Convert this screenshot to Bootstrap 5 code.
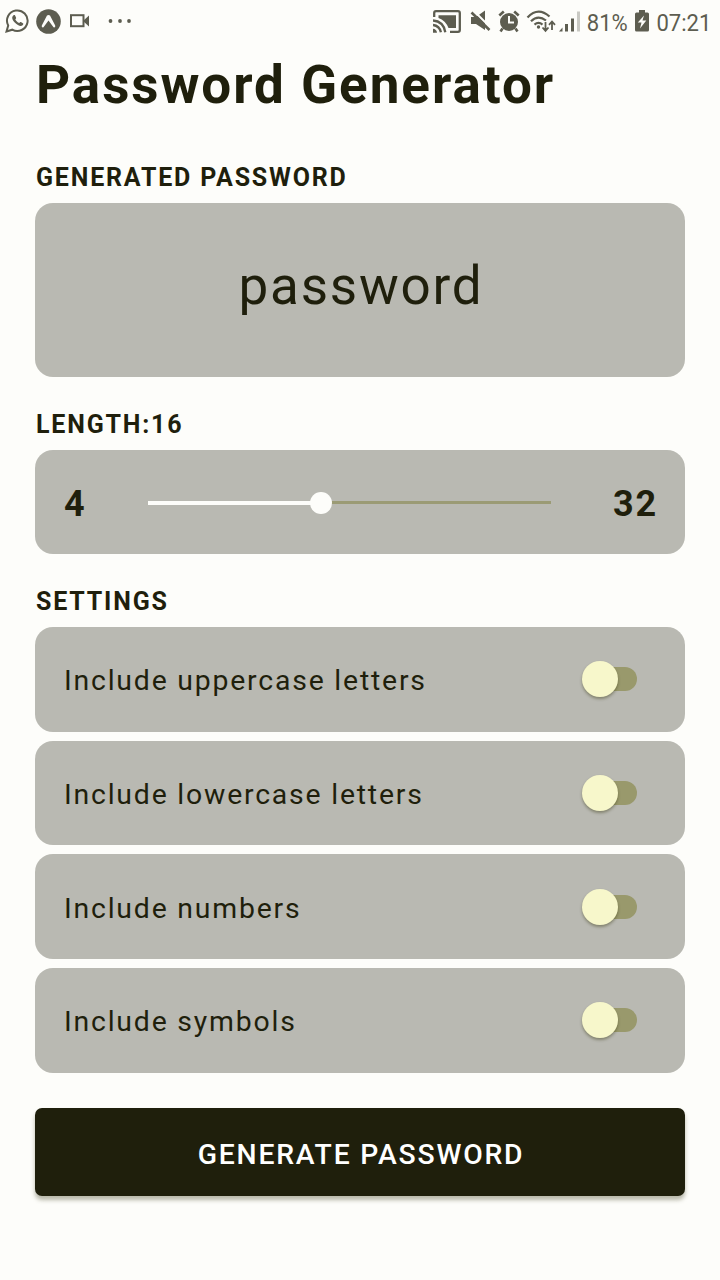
<!DOCTYPE html>
<html lang="en">
<head>
<meta charset="utf-8">
<meta name="viewport" content="width=device-width, initial-scale=1">
<title>Password Generator</title>
<link href="https://cdn.jsdelivr.net/npm/bootstrap@5.3.0/dist/css/bootstrap.min.css" rel="stylesheet">
<style>
:root{--ink:#1f1f0c;--panel:#b9b9b2;--paper:#fdfdfa;--status:#5d5d50}
body{font-family:Roboto,sans-serif;background:var(--paper);color:var(--ink);min-height:1280px;line-height:1}
.statusbar{height:42px;color:var(--status);padding-left:5px;padding-right:9px}
.statusbar svg{display:block;flex:none}
.clock{font-size:24px;line-height:40px;padding-top:3px;transform:scaleX(.92);white-space:nowrap;flex:none}
.screen{padding:0 35px 0 35px}
.title{font-size:53px;font-weight:700;letter-spacing:1.95px;line-height:60px;margin:13px 0 0 1px;height:100px;white-space:nowrap}
.caption{font-size:25px;font-weight:700;letter-spacing:1.8px;line-height:30px;margin:0 0 0 1px}
.panel{background:var(--panel);border-radius:18px}
.output{height:174px;margin-top:10px;font-size:53px;letter-spacing:1.8px;padding:0 0 8px 2px}
.range-panel{height:104px;padding:0 27px 0 29px;font-size:36px;font-weight:700;letter-spacing:1.8px}
.range-panel>span{padding-top:4px}
.track{width:403px;height:3px;background:#9b9b75}
.track-fill{height:4px;background:var(--paper)}
.thumb{width:22px;height:22px;right:-11px;top:-9px;background:var(--paper)}
.option{height:104.7px;padding:0 48px 0 29px;font-size:28.4px;letter-spacing:1.8px}
.option>span:first-child{padding-top:4px}
.toggle{width:55px;height:36px}
.toggle::before{content:"";position:absolute;right:0;top:6px;width:46px;height:24px;border-radius:12px;background:#99996c}
.toggle::after{content:"";position:absolute;left:0;top:0;width:36px;height:36px;border-radius:50%;background:#f7f7cb;box-shadow:0 2px 3px rgba(50,50,10,.4)}
.generate{height:88px;margin-top:35px;padding:13px 0 6px 2px;background:var(--ink)!important;color:#fff!important;border:0;border-radius:7px;font-size:28.3px;font-weight:500;letter-spacing:1.8px;box-shadow:0 4px 4px rgba(80,80,50,.4)}
</style>
</head>
<body>
<header class="statusbar d-flex align-items-center">
  <svg width="25" height="26" viewBox="0 0 25 26" fill="none" stroke="currentColor" stroke-width="2"><path d="M1.500 23.500l1.700-6a10.300 10.300 0 1 1 4.100 4.200z"/><path d="M8.300 7.500c-2 1.700-1 4.500 1.700 7.200s5.800 4.200 7.600 2.500c1-.9.800-1.500.3-1.900l-2-1.200c-.6-.3-.8-.1-1.600.9-1.700-.5-3.300-2-4-3.700.9-.9 1-1.100.7-1.800l-.9-2c-.4-.5-.9-.6-1.800 0z" fill="currentColor" stroke="none"/></svg>
  <svg style="margin-left:6px" width="25" height="25" viewBox="0 0 25 25"><circle cx="12.500" cy="12.500" r="12.300" fill="currentColor"/><path d="M11 6.500q1.500-1.200 3 0l5.200 10q.5 2.300-1.700 1.800L12.500 11.500 7.500 18.300q-2.200.5-1.700-1.800z" fill="#fdfdfa"/></svg>
  <svg style="margin-left:9px" width="20" height="14" viewBox="0 0 20 14"><rect x="1" y="1.200" width="12.500" height="11" fill="none" stroke="currentColor" stroke-width="2"/><path d="M13 7l6-5.500v11z" fill="currentColor"/></svg>
  <svg style="margin-left:18px" width="24" height="6" viewBox="0 0 24 6" fill="currentColor"><circle cx="2.500" cy="3" r="1.900"/><circle cx="12" cy="3" r="1.900"/><circle cx="21" cy="3" r="1.900"/></svg>
  <div class="d-flex align-items-center ms-auto">
    <svg width="28" height="23" viewBox="0 0 28 23" fill="none" stroke="currentColor" stroke-width="2.300"><path d="M1.200 7V3q0-1.800 1.800-1.800h22q1.800 0 1.800 1.800v17q0 1.800-1.800 1.800h-8"/><path d="M5.500 5.200h17.500v12.800h-7.500Q12.500 10.500 5.500 8z" fill="currentColor" stroke="none"/><path d="M0 10.500q10.500.8 12.300 11.700M0 15q6.500.8 7.900 7.300"/><path d="M0 18.800q3.500.3 4 4H0z" fill="currentColor" stroke="none"/></svg>
    <svg style="margin-left:9px" width="21" height="22" viewBox="0 0 21 22"><path d="M1 7h5l9-6.500V20l-9-6H1z" fill="currentColor"/><path d="M3 0l18 18" stroke="#fdfdfa" stroke-width="2"/><path d="M1.500 2.500l18 17.500" stroke="currentColor" stroke-width="2.600"/></svg>
    <svg style="margin-left:7px" width="22" height="23" viewBox="0 0 22 23"><circle cx="11" cy="12" r="9" fill="currentColor"/><path d="M1.300 5.500L5.800 1.500M16.200 1.500l4.500 4M4.500 18.500l-2 3M17.500 18.500l2 3" stroke="currentColor" stroke-width="2.600"/><path d="M11 6v6.500h5" fill="none" stroke="#fdfdfa" stroke-width="2"/></svg>
    <svg style="margin-left:6px" width="30" height="24" viewBox="0 0 30 24" fill="none" stroke="currentColor" stroke-width="2.200"><path d="M1.500 8.500Q12-2.800 23.500 7.500M5 12.300q7-7 15-.8M8.500 15.600q4-3.500 8 0"/><circle cx="12.500" cy="18" r="1.700" fill="currentColor" stroke="none"/><path d="M19.500 13v8.500M16.500 18.500l3 3.300 3-3.300M26 21v-8.500M23 15.800l3-3.300 3 3.300" stroke-width="1.800"/></svg>
    <svg style="margin-left:3px" width="22" height="22" viewBox="0 0 22 22" fill="currentColor"><path d="M0 21.500l3.500-4v4zM6 14h3v7.500H6zM12 8.500h3v13h-3z"/><path d="M18 1.500h3v20h-3z" opacity=".32"/></svg>
    <span class="clock" style="margin-left:4px">81%</span>
    <svg style="margin-left:6px" width="14" height="22" viewBox="0 0 14 22"><path d="M4 0h6v2.500h2.500q1.500 0 1.500 1.500v16q0 1.500-1.500 1.500h-11Q0 21.500 0 20V4q0-1.500 1.500-1.500H4z" fill="currentColor"/><path d="M9 5.500L2.800 12.500h3.700l-1.500 6 6.300-8H7.500z" fill="#fdfdfa"/></svg>
    <span class="clock" style="margin-left:5px;margin-right:-3px">07:21</span>
  </div>
</header>
<main class="screen">
  <h1 class="title">Password Generator</h1>
  <h2 class="caption" style="padding-top:8px">GENERATED PASSWORD</h2>
  <div class="panel output d-flex align-items-center justify-content-center">password</div>
  <h2 class="caption" style="margin-top:33px">LENGTH:16</h2>
  <div class="panel range-panel d-flex align-items-center justify-content-between" style="margin-top:10px">
    <span>4</span>
    <div class="track position-relative"><div class="track-fill position-relative" style="width:42.8%"><span class="thumb rounded-circle position-absolute"></span></div></div>
    <span>32</span>
  </div>
  <h2 class="caption" style="margin-top:33px">SETTINGS</h2>
  <div class="d-flex flex-column" style="gap:9px;margin-top:10px">
    <div class="panel option d-flex align-items-center justify-content-between"><span>Include uppercase letters</span><span class="toggle position-relative"></span></div>
    <div class="panel option d-flex align-items-center justify-content-between"><span>Include lowercase letters</span><span class="toggle position-relative"></span></div>
    <div class="panel option d-flex align-items-center justify-content-between"><span>Include numbers</span><span class="toggle position-relative"></span></div>
    <div class="panel option d-flex align-items-center justify-content-between"><span>Include symbols</span><span class="toggle position-relative"></span></div>
  </div>
  <button type="button" class="btn btn-dark generate w-100">GENERATE PASSWORD</button>
</main>
<script src="https://cdn.jsdelivr.net/npm/bootstrap@5.3.0/dist/js/bootstrap.bundle.min.js"></script>
</body>
</html>
